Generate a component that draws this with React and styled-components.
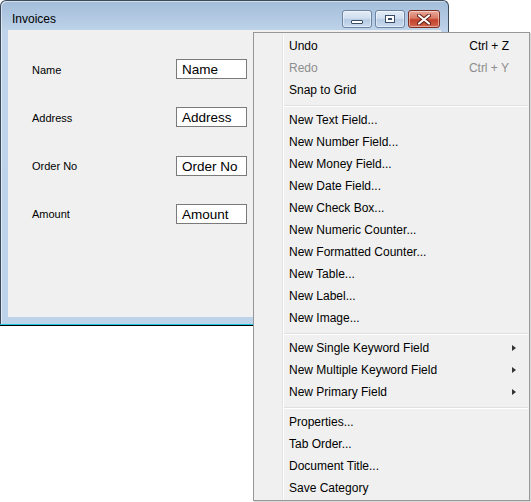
import React from 'react';
import styled, { createGlobalStyle } from 'styled-components';

const GlobalStyle = createGlobalStyle`
  html, body {
    margin: 0;
    padding: 0;
    background: #ffffff;
  }
  * {
    box-sizing: border-box;
  }
`;

const Desktop = styled.div`
  position: relative;
  width: 531px;
  height: 502px;
  overflow: hidden;
  background: #ffffff;
  font-family: "Liberation Sans", Arial, sans-serif;
`;

const Window = styled.div`
  position: absolute;
  left: 0;
  top: 0;
  width: 449px;
  height: 326px;
  display: flex;
  flex-direction: column;
  border: 1px solid #3c4a5a;
  border-bottom: none;
  border-radius: 6px 6px 0 0;
  background: linear-gradient(#a3bdd9 0px, #b4cbe4 20px, #bfd4ea 30px, #bcd3ea 100%);
  box-shadow: inset 1px 1px 0 rgba(255, 255, 255, 0.5);
`;

const TitleBar = styled.div`
  height: 29px;
  display: flex;
  align-items: flex-start;
  justify-content: space-between;
  padding: 0 8px 0 11px;
`;

const Title = styled.span`
  margin-top: 11px;
  font-size: 12px;
  color: #000;
`;

const Caption = styled.div`
  display: flex;
  gap: 3px;
  margin-top: 9px;
`;

const CaptionButton = styled.div`
  width: ${p => (p.$close ? '32px' : '30px')};
  height: 18px;
  display: flex;
  align-items: center;
  justify-content: center;
  border-radius: 3px;
  border: 1px solid ${p => (p.$close ? '#7b2d22' : '#6e84a3')};
  background: ${p =>
    p.$close
      ? 'linear-gradient(#e9a99b 0%, #d97964 45%, #c4412c 55%, #d0654d 100%)'
      : 'linear-gradient(#e4edf7 0%, #cfdeef 45%, #b6cbe3 55%, #c9dbee 100%)'};
  box-shadow: inset 0 0 0 1px rgba(255, 255, 255, 0.45);
`;

const MinGlyph = styled.div`
  width: 12px;
  height: 4px;
  margin-top: 5px;
  background: #fff;
  border: 1px solid #3a4c63;
  border-radius: 1px;
`;

const MaxGlyph = styled.div`
  width: 10px;
  height: 8px;
  border: 1px solid #3a4c63;
  background: #fff;
  box-shadow: inset 0 0 0 2px #fff, inset 0 0 0 3px #3a4c63;
`;

const Client = styled.div`
  flex: 1;
  margin: 0 7px 7px 7px;
  background: #f0f0f0;
  display: grid;
  grid-template-columns: 144px 71px;
  grid-auto-rows: 20px;
  row-gap: 28.3px;
  align-content: start;
  padding: 29px 0 0 24px;
`;

const BottomEdge = styled.div`
  height: 2px;
  background: #1ec8e0;
  border-bottom: 1px solid #000;
  margin: 0 -1px;
`;

const Label = styled.label`
  align-self: center;
  margin-top: 1px;
  font-size: 11px;
  color: #000;
`;

const Field = styled.div`
  height: 20px;
  border: 1px solid #7a7a7a;
  background: #fff;
  padding: 0 0 0 5px;
  font-size: 13.5px;
  line-height: 19px;
  color: #000;
  white-space: nowrap;
  overflow: hidden;
`;

const Menu = styled.div`
  position: absolute;
  left: 253px;
  top: 32px;
  width: 277px;
  padding: 2px 1px 1px 1px;
  border: 1px solid #979797;
  background: #f0f0f0;
  box-shadow: 1px 1px 1px rgba(0, 0, 0, 0.15);
  font-family: "Liberation Sans", Arial, sans-serif;
  font-size: 12px;
`;

const Gutter = styled.div`
  position: absolute;
  left: 28px;
  top: 1px;
  bottom: 1px;
  width: 2px;
  border-left: 1px solid #e2e3e3;
  border-right: 1px solid #ffffff;
`;

const Item = styled.div`
  position: relative;
  height: 22px;
  display: flex;
  align-items: center;
  padding: 0 19px 0 34px;
  color: ${p => (p.$disabled ? '#8d8d8d' : '#000')};
`;

const ItemText = styled.span`
  flex: 1;
`;

const Shortcut = styled.span`
  white-space: pre;
`;

const Arrow = styled.span`
  width: 0;
  height: 0;
  margin-right: -7px;
  border-top: 3.5px solid transparent;
  border-bottom: 3.5px solid transparent;
  border-left: 4px solid #333;
`;

const Separator = styled.div`
  position: relative;
  height: 8px;
  margin-left: 29px;
  &::after {
    content: '';
    position: absolute;
    left: 0;
    right: 0;
    top: 4px;
    height: 1px;
    background: #e0e0e0;
    border-bottom: 1px solid #ffffff;
    box-sizing: content-box;
  }
`;

const fields = ['Name', 'Address', 'Order No', 'Amount'];

const menu = [
  { text: 'Undo', key: 'Ctrl + Z' },
  { text: 'Redo', key: 'Ctrl + Y', disabled: true },
  { text: 'Snap to Grid' },
  '-',
  { text: 'New Text Field...' },
  { text: 'New Number Field...' },
  { text: 'New Money Field...' },
  { text: 'New Date Field...' },
  { text: 'New Check Box...' },
  { text: 'New Numeric Counter...' },
  { text: 'New Formatted Counter...' },
  { text: 'New Table...' },
  { text: 'New Label...' },
  { text: 'New Image...' },
  '-',
  { text: 'New Single Keyword Field', sub: true },
  { text: 'New Multiple Keyword Field', sub: true },
  { text: 'New Primary Field', sub: true },
  '-',
  { text: 'Properties...' },
  { text: 'Tab Order...' },
  { text: 'Document Title...' },
  { text: 'Save Category' },
];

const CloseGlyph = () => (
  <svg width="14" height="11" viewBox="0 0 14 11">
    <path
      d="M2 1.5 L12 9.5 M12 1.5 L2 9.5"
      stroke="#5a1a12"
      strokeWidth="4"
      strokeLinecap="round"
    />
    <path
      d="M2 1.5 L12 9.5 M12 1.5 L2 9.5"
      stroke="#ffffff"
      strokeWidth="2.2"
      strokeLinecap="round"
    />
  </svg>
);

const App = () => {
  return (
    <Desktop>
      <GlobalStyle />
      <Window>
        <TitleBar>
          <Title>Invoices</Title>
          <Caption>
            <CaptionButton>
              <MinGlyph />
            </CaptionButton>
            <CaptionButton>
              <MaxGlyph />
            </CaptionButton>
            <CaptionButton $close>
              <CloseGlyph />
            </CaptionButton>
          </Caption>
        </TitleBar>
        <Client>
          {fields.map(f => (
            <React.Fragment key={f}>
              <Label>{f}</Label>
              <Field>{f}</Field>
            </React.Fragment>
          ))}
        </Client>
        <BottomEdge />
      </Window>

      <Menu>
        <Gutter />
        {menu.map((m, i) =>
          m === '-' ? (
            <Separator key={i} />
          ) : (
            <Item key={i} $disabled={m.disabled}>
              <ItemText>{m.text}</ItemText>
              {m.key && <Shortcut>{m.key}</Shortcut>}
              {m.sub && <Arrow />}
            </Item>
          )
        )}
      </Menu>
    </Desktop>
  );
};

export default App;
